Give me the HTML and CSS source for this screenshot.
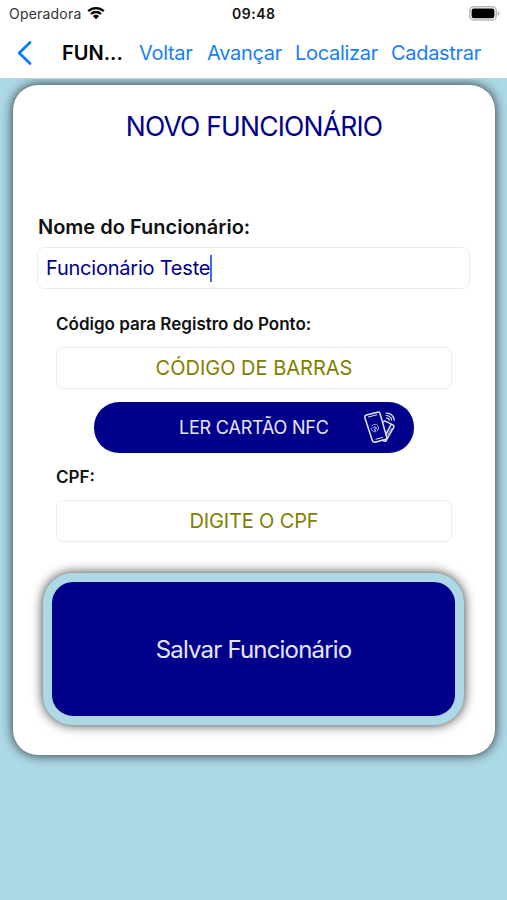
FILE: index.html
```html
<!DOCTYPE html>
<html lang="pt-BR">
<head>
    <meta charset="UTF-8">
    <meta name="viewport" content="width=device-width, initial-scale=1.0">
    <title>Novo Funcionário</title>
    <link rel="stylesheet" href="styles.css">
</head>
<body>
    <header class="topo">
        <div class="status">
            <div class="operadora">
                <span>Operadora</span>
                <svg class="wifi" viewBox="0 0 18 14" width="18" height="14">
                    <path d="M1.2 5.2a11.2 11.2 0 0 1 15.6 0M4 8a7.2 7.2 0 0 1 10 0" fill="none" stroke="#000" stroke-width="2.3"/>
                    <path d="M9 13.2 5.9 10.1a4.5 4.5 0 0 1 6.2 0z"/>
                </svg>
            </div>
            <span class="hora">09:48</span>
            <svg class="bateria" viewBox="0 0 31 15" width="31" height="15">
                <rect x=".8" y=".8" width="26.4" height="13.2" rx="4" fill="#fff" stroke="#b8b8b8" stroke-width="1.5"/>
                <rect x="2.6" y="2.6" width="22.8" height="9.6" rx="2.2"/>
                <path d="M28.6 5.2c2.4.8 2.4 3.8 0 4.6z" fill="#b0b0b0"/>
            </svg>
        </div>
        <nav class="menu">
            <svg class="seta" viewBox="0 0 15 24" width="15" height="24">
                <path d="M13 1.5 2.2 12 13 22.5" fill="none" stroke="#087aff" stroke-width="2.7" stroke-linecap="round" stroke-linejoin="round"/>
            </svg>
            <strong>FUN...</strong>
            <a class="voltar">Voltar</a>
            <a class="avancar">Avançar</a>
            <a class="localizar">Localizar</a>
            <a class="cadastrar">Cadastrar</a>
        </nav>
    </header>

    <main class="cartao">
        <h1>NOVO FUNCIONÁRIO</h1>
        <label class="rotulo-nome">Nome do Funcionário:</label>
        <div class="campo nome"><span>Funcionário Teste</span><i class="cursor"></i></div>
        <div class="dados">
            <label class="rotulo-codigo">Código para Registro do Ponto:</label>
            <div class="campo codigo"><span>CÓDIGO DE BARRAS</span></div>
            <button class="nfc">
                <span>LER CARTÃO NFC</span>
                <svg viewBox="0 0 33 33" width="33" height="33" fill="none" stroke="#e6e6fa" stroke-width="1.5" stroke-linejoin="round" stroke-linecap="round">
                    <path d="M3.4 4 14.5 1.2q2-.5 2.6 1.5L23.7 26q.5 2-1.5 2.6L12 31.2q-2 .5-2.6-1.5L1.8 6.6Q1.3 4.6 3.4 4z"/>
                    <path d="m5.4 6 8.4-2.2M13 28.2l6.7-1.8" stroke-width="1"/>
                    <path d="m20.3 10.8 1.6-.9 8.4 4.2q1.2.7.5 2L23.2 29.5q-.8 1.3-2.2.6l-1.3-.7M23.4 22.4l4.8-9"/>
                    <path d="m24.4 24.3 4-6.8" stroke-width=".8"/>
                    <path d="M8.8 14.8q3.8-3 6.2 0 2 3.6-.8 5.2M8.2 17q.6 4 3.8 4M10 16.5q3.8-2 4 1.5M11 18.3l1.9 1.5M12.1 16.2v4.4" stroke-width=".7"/>
                    <path d="M23.2 2.1q7.1.1 8.1 7.1M23.2 4.5q4.8.3 5.5 4.7M23.6 6.8q2.4.2 2.7 2.4" stroke-width="1.2"/>
                </svg>
            </button>
            <label class="rotulo-cpf">CPF:</label>
            <div class="campo cpf"><span>DIGITE O CPF</span></div>
        </div>
        <button class="salvar"><span>Salvar Funcionário</span></button>
    </main>
</body>
</html>
```
FILE: styles.css
```css
* {
    box-sizing: border-box;
}
body {
    margin: 0;
    height: 900px;
    overflow: hidden;
    background-color: lightblue;
    font-family: Inter, "Liberation Sans", sans-serif;
    color: #111;
}
.topo {
    position: relative;
    z-index: 1;
    height: 79px;
    background-color: #fff;
    border-bottom: 1px solid #c5d0d3;
}
.status {
    display: flex;
    justify-content: space-between;
    height: 27px;
    padding: 0 7px 0 9px;
    line-height: 28px;
    font-size: 14px;
}
.operadora, .bateria {
    flex: none;
}
.operadora {
    display: flex;
    width: 223px;
    gap: 6px;
    color: #333;
    letter-spacing: 0.2px;
}
.wifi {
    margin-top: 6px;
}
.hora {
    flex: 1;
    font-weight: 600;
    letter-spacing: 0.5px;
}
.bateria {
    margin-top: 6px;
}
.menu {
    display: flex;
    align-items: center;
    height: 51px;
    padding-left: 17px;
    font-size: 20px;
    white-space: nowrap;
}
.menu strong {
    width: 76px;
    margin-left: 30px;
    font-weight: 600;
    color: #000;
}
.menu a {
    color: #1680f5;
    letter-spacing: -0.3px;
}
.voltar {
    width: 68px;
    margin-left: 1px;
}
.avancar {
    width: 88px;
}
.localizar {
    width: 96px;
}
.cartao {
    height: 670px;
    margin: 6px 12px 0 13px;
    padding: 20px 24px 0;
    background-color: #fff;
    border-radius: 25px;
    box-shadow: 0 0 12px rgba(0, 0, 0, 0.8);
}
h1 {
    margin: 0 0 66px;
    height: 42px;
    line-height: 42px;
    text-align: center;
    font-size: 26.5px;
    font-weight: 400;
    letter-spacing: -0.8px;
    color: darkblue;
}
label {
    display: block;
    font-weight: 600;
}
.rotulo-nome {
    height: 34px;
    margin-left: 1px;
    padding-top: 1px;
    line-height: 27px;
    font-size: 20px;
}
.campo {
    display: flex;
    align-items: center;
    justify-content: center;
    height: 42px;
    border: 1px solid #ececec;
    border-radius: 7px;
    font-size: 20px;
    color: olive;
}
.nome {
    width: 433px;
    justify-content: flex-start;
    padding-left: 8px;
    letter-spacing: -0.22px;
    color: darkblue;
}
.cursor {
    width: 2px;
    height: 27px;
    background-color: #3d6be0;
}
.dados {
    width: 396px;
    margin-left: 19px;
}
.rotulo-codigo {
    height: 58px;
    padding-top: 25px;
    line-height: 20px;
    font-size: 17px;
}
button {
    border: none;
    font-family: inherit;
    color: #e6e6fa;
    background-color: darkblue;
}
.nfc {
    display: flex;
    align-items: center;
    width: 320px;
    height: 51px;
    margin: 13px 0 0 38px;
    padding: 0 18px 0 85px;
    justify-content: space-between;
    border-radius: 25px;
    font-size: 18px;
    letter-spacing: -0.2px;
    white-space: nowrap;
}
.rotulo-cpf {
    height: 47px;
    padding-top: 14px;
    line-height: 20px;
    font-size: 17px;
}
.cpf {
    letter-spacing: -0.15px;
}
.salvar {
    display: block;
    width: 421px;
    height: 152px;
    margin: 31px 0 0 6px;
    border: 9px solid lightblue;
    border-radius: 30px;
    box-shadow: 0 0 12px rgba(0, 0, 0, 0.8);
    font-size: 24px;
    letter-spacing: -0.82px;
}
```
